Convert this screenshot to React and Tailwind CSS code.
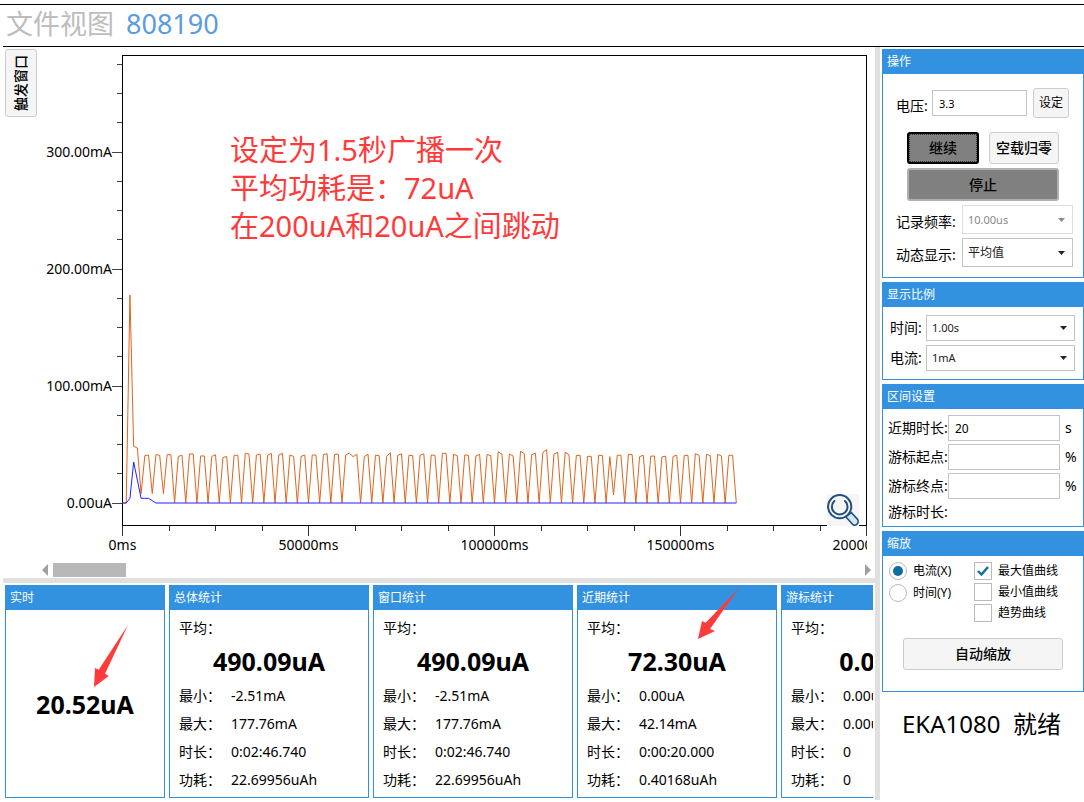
import {useState} from 'react';

const PLOT = {left: 82, top: 8, right: 826, bottom: 478, zero: 456};

const toX = (ms) => PLOT.left + 0.5 + (ms / 50000) * 186;
const toY = (mA) => PLOT.zero - mA * 1.17;

// one sample per second, mA
const MAX_CURVE = [
  0, 0, 177.8, 48.4, 47, 8, 40.4, 41, 8, 41.3, 40.8, 8, 41.3, 41.3, 0, 39.8, 40.8, 0, 41.9, 41.9,
  0, 40.2, 40.2, 0, 39.8, 41.3, 0, 38.8, 39.8, 0, 40.8, 40.8, 0, 42.4, 41.9, 0, 41, 41.9, 0, 40.8,
  42.4, 0, 41, 42.4, 0, 41, 39.8, 0, 39.8, 41, 0, 41, 41, 0, 41.2, 42.2, 0, 41.6, 41.8, 0,
  41, 42.7, 39.6, 41.6, 0, 39.6, 41.6, 0, 40.8, 40.4, 0, 39.8, 43, 0, 40.8, 42, 0, 40.8, 40.5, 0,
  40.8, 42, 0, 41, 40.8, 0, 42.5, 42.4, 0, 41.6, 40.4, 0, 41, 40.8, 0, 40.2, 41.6, 0, 41.4, 40.5,
  0, 43.8, 41.9, 0, 41.9, 40.2, 0, 44.2, 42.2, 0, 41.3, 42.5, 0, 43.3, 45.6, 0, 41.9, 43.3, 0, 43.3,
  41.3, 0, 40.5, 40.8, 0, 39.9, 39.9, 0, 40.8, 40.6, 0, 39.6, 7, 40.8, 40.8, 0, 41.6, 41.3, 0, 39.6,
  40.8, 0, 40, 40.2, 0, 39.4, 40, 0, 39.8, 40.8, 0, 40.5, 40.8, 0, 42.2, 40.8, 0, 41.6, 40.5, 0,
  41.6, 40.2, 0, 40.8, 40.8, 0,
];
const AVG_CURVE = [0, 0, 4, 35, 19.5, 4, 4, 4, 2, 0];

const linePath = (samples) => samples.map((v, i) => `${i ? 'L' : 'M'}${toX(i * 1000)} ${toY(v)}`).join('');

const X_TICKS = Array.from({length: 17}, (_, i) => i * 12500);
const Y_TICKS = Array.from({length: 16}, (_, i) => i * 25);

const STATS = [
  {title: '总体统计', avg: '490.09uA', min: '-2.51mA', max: '177.76mA', time: '0:02:46.740', used: '22.69956uAh'},
  {title: '窗口统计', avg: '490.09uA', min: '-2.51mA', max: '177.76mA', time: '0:02:46.740', used: '22.69956uAh'},
  {
    title: '近期统计',
    avg: '72.30uA',
    min: '0.00uA',
    max: '42.14mA',
    time: '0:00:20.000',
    used: '0.40168uAh',
    marked: true,
  },
  {title: '游标统计', avg: '0.00uA', min: '0.00uA', max: '0.00uA', time: '0', used: '0'},
];

function App() {
  return (
    <div className="w-full bg-white pt-1 font-['Noto_Sans','Noto_Sans_CJK_SC',sans-serif] text-sm leading-5 text-black">
      <header className="flex h-[42px] items-center gap-3 border-t border-black px-1.5 pb-[3px] text-[27px] leading-9">
        <h1 className="text-[#bdbdbd]">文件视图</h1>
        <span className="text-[#5b9be0]">808190</span>
      </header>
      <div className="ml-[3px] flex border-t border-black">
        <main className="min-w-0 flex-1">
          <ChartArea />
          <div className="h-[5px] bg-[#e0e0e0]" />
          <div className="mr-0.5 flex gap-1 overflow-hidden pt-0.5 pb-0.5 pl-0.5">
            <Panel
              title="实时"
              className="relative flex w-40 shrink-0 flex-col"
            >
              <p className="flex flex-1 items-center justify-center text-[25px] leading-8 font-bold">20.52uA</p>
              <RedArrow className="absolute top-[39px] left-[88px] h-[62px] w-[34px]" />
            </Panel>
            {STATS.map((s) => (
              <StatPanel
                key={s.title}
                {...s}
              />
            ))}
          </div>
        </main>
        <div className="w-[5px] shrink-0 bg-[#e0e0e0]" />
        <Sidebar />
      </div>
    </div>
  );
}

const Panel = ({title, className = '', children}) => {
  return (
    <section className={`border border-[#3392df] ${className}`}>
      <h2 className="h-6 bg-[#3392df] px-1 text-xs leading-6 text-white">{title}</h2>
      {children}
    </section>
  );
};

const ChartArea = () => {
  return (
    <>
      <div className="relative flex items-start gap-[3px] pl-0.5">
        <button className="mt-0.5 flex h-[68px] w-8 shrink-0 items-center justify-center rounded-[3px] border border-[#ccc] bg-[#f5f5f5] font-medium">
          <span className="rotate-180 [text-orientation:sideways] [writing-mode:vertical-rl]">触发窗口</span>
        </button>
        <div className="relative min-w-0 flex-1">
          <Chart />
          <div className="absolute top-[84px] left-[190px] text-[29px] leading-[38px] whitespace-nowrap text-[#ff3a3a]">
            <p>设定为1.5秒广播一次</p>
            <p>平均功耗是：72uA</p>
            <p>在200uA和20uA之间跳动</p>
          </div>
          <button
            aria-label="放大"
            className="absolute right-4 bottom-9 size-8 bg-[#f5f5f5]"
          >
            <Magnifier />
          </button>
        </div>
      </div>
      <div className="flex h-4 items-center pr-1 pl-[39px]">
        <svg
          viewBox="0 0 6 12"
          className="h-3 w-1.5 fill-[#a0a0a0]"
        >
          <path d="M6 0V12L0 6Z" />
        </svg>
        <div className="flex flex-1 px-[5px]">
          <div className="h-3.5 w-[73px] bg-[#b8b8b8]" />
        </div>
        <svg
          viewBox="0 0 6 12"
          className="h-3 w-1.5 fill-[#a0a0a0]"
        >
          <path d="M0 0V12L6 6Z" />
        </svg>
      </div>
    </>
  );
};

const Chart = () => {
  return (
    <svg
      viewBox="0 0 835 515"
      className="block w-full text-sm"
    >
      <defs>
        <clipPath id="axis-clip">
          <rect
            width={PLOT.right + 1}
            height="515"
          />
        </clipPath>
      </defs>
      <rect
        x={PLOT.left + 0.5}
        y={PLOT.top + 0.5}
        width={PLOT.right - PLOT.left}
        height={PLOT.bottom - PLOT.top}
        fill="none"
        stroke="#000"
      />
      {Y_TICKS.map((v) => (
        <g key={v}>
          <path
            d={`M${v % 100 ? 77 : 72} ${Math.floor(toY(v)) + 0.5}H${PLOT.left}`}
            stroke="#444"
          />
          {v % 100 === 0 && (
            <text
              x="72"
              y={Math.round(toY(v)) + 5}
              textAnchor="end"
            >
              {v ? `${v}.00mA` : '0.00uA'}
            </text>
          )}
        </g>
      ))}
      <g clipPath="url(#axis-clip)">
        {X_TICKS.map((ms) => (
          <g key={ms}>
            <path
              d={`M${Math.floor(toX(ms)) + 0.5} ${PLOT.bottom + 1}v${ms % 50000 ? 5 : 10}`}
              stroke="#333"
            />
            {ms % 50000 === 0 && (
              <text
                x={toX(ms)}
                y="503"
                textAnchor="middle"
              >
                {`${ms}ms`}
              </text>
            )}
          </g>
        ))}
      </g>
      <path
        d={linePath(MAX_CURVE)}
        fill="none"
        stroke="#e0651c"
        strokeLinejoin="bevel"
      />
      <path
        d={`${linePath(AVG_CURVE)}H${toX(165000)}`}
        fill="none"
        stroke="#2020ff"
      />
    </svg>
  );
};

const Magnifier = () => {
  return (
    <svg
      viewBox="0 0 32 32"
      className="size-8"
      fill="none"
      stroke="#264f7e"
      strokeWidth="2"
      strokeLinecap="round"
    >
      <path
        d="M18.7 22.7L24.5 18.7L30.6 25.4C32.4 28.6 29.2 32.4 26 30.8Z"
        fill="#cfe8fb"
        strokeWidth="1.6"
        strokeLinejoin="round"
      />
      <circle
        cx="12.7"
        cy="12.7"
        r="11.6"
        fill="#f5f5f5"
      />
      <path d="M7.4 7A7.8 7.8 0 1 0 18 7" />
    </svg>
  );
};

const RedArrow = ({className}) => {
  return (
    <svg
      viewBox="0 0 34 62"
      className={className}
    >
      <path
        d="M0 62L1 43L4.7 44.7L34 0L11 48.7L14.7 51Z"
        fill="#ff3a3a"
      />
    </svg>
  );
};

const StatPanel = ({title, avg, min, max, time, used, marked}) => {
  const rows = [
    ['最小：', min],
    ['最大：', max],
    ['时长：', time],
    ['功耗：', used],
  ];

  return (
    <Panel
      title={title}
      className="relative w-[200px] shrink-0"
    >
      <div className="px-[9px] pt-2 pb-[3px]">
        <p>平均：</p>
        <p className="mt-[7px] mb-[5px] text-center text-[25px] leading-8 font-bold">{avg}</p>
        <dl>
          {rows.map(([label, value]) => (
            <div
              key={label}
              className="flex leading-7"
            >
              <dt className="w-[52px]">{label}</dt>
              <dd>{value}</dd>
            </div>
          ))}
        </dl>
      </div>
      {marked && (
        <svg
          viewBox="0 0 41 51"
          className="absolute top-0.5 left-[120px] h-[51px] w-[41px]"
        >
          <path
            d="M0 51L4 33L7.7 34.7L41 0L12 41L17 43Z"
            fill="#ff3a3a"
          />
        </svg>
      )}
    </Panel>
  );
};

const Select = ({id, options, disabled, className = ''}) => {
  return (
    <div className={`relative ${disabled ? 'text-[#888]' : 'text-[#222]'} ${className}`}>
      <select
        id={id}
        disabled={disabled}
        className={`size-full appearance-none border bg-white px-[5px] ${disabled ? 'border-[#ddd]' : 'border-[#c4c4c4]'}`}
      >
        {options.map((o) => (
          <option key={o}>{o}</option>
        ))}
      </select>
      <svg
        viewBox="0 0 7 4"
        className="pointer-events-none absolute top-1/2 right-2 -mt-0.5 h-1 w-[7px] fill-current"
      >
        <path d="M0 0H7L3.5 4Z" />
      </svg>
    </div>
  );
};

const Sidebar = () => {
  return (
    <aside className="flex w-[204px] shrink-0 flex-col gap-1 pt-0.5 pl-0.5">
      <Panel title="操作">
        <div className="flex items-center px-[13px] pt-[14px]">
          <label
            htmlFor="voltage"
            className="w-9 pt-1.5"
          >
            电压:
          </label>
          <input
            id="voltage"
            defaultValue="3.3"
            className="h-[26px] w-[95px] border border-[#c4c4c4] px-1.5 text-[11px]"
          />
          <button className="ml-1.5 h-[30px] w-9 rounded-[3px] border border-[#ccc] bg-[#f5f5f5] text-xs">设定</button>
        </div>
        <div className="grid grid-cols-[72px_70px] gap-x-2.5 gap-y-1 px-6 pt-[14px] font-medium">
          <button className="h-8 rounded-[3px] border-2 border-black bg-[#808080] outline-1 -outline-offset-3 outline-[#333] outline-dotted">
            继续
          </button>
          <button className="h-8 rounded-[3px] border border-[#ccc] bg-[#f5f5f5] whitespace-nowrap">空载归零</button>
          <button className="col-span-2 h-[33px] rounded-[3px] border-2 border-[#b0b0b0] bg-[#808080]">停止</button>
        </div>
        <div className="grid grid-cols-[66px_111px] items-center gap-y-1 px-[13px] pt-1 pb-2.5">
          <label
            htmlFor="rate"
            className="pt-1"
          >
            记录频率:
          </label>
          <Select
            id="rate"
            options={['10.00us']}
            disabled
            className="h-[29px] text-[11px]"
          />
          <label
            htmlFor="live"
            className="pt-1"
          >
            动态显示:
          </label>
          <Select
            id="live"
            options={['平均值']}
            className="h-[29px] text-xs"
          />
        </div>
      </Panel>

      <Panel title="显示比例">
        <div className="grid grid-cols-[36px_149px] items-center gap-y-1 px-[7px] py-2">
          <label htmlFor="scale-time">时间:</label>
          <Select
            id="scale-time"
            options={['1.00s']}
            className="h-[26px] text-[11px]"
          />
          <label htmlFor="scale-current">电流:</label>
          <Select
            id="scale-current"
            options={['1mA']}
            className="h-[26px] text-[11px]"
          />
        </div>
      </Panel>

      <Panel title="区间设置">
        <div className="grid grid-cols-[60px_112px_auto] items-center gap-y-[3px] px-[5px] pt-1.5 pb-1">
          <RangeField
            id="recent"
            label="近期时长:"
            value="20"
            unit="s"
          />
          <RangeField
            id="cursor-start"
            label="游标起点:"
            value=""
            unit="%"
          />
          <RangeField
            id="cursor-end"
            label="游标终点:"
            value=""
            unit="%"
          />
          <span>游标时长:</span>
        </div>
      </Panel>

      <ZoomPanel />

      <p className="pt-3 pl-5 text-2xl leading-8 whitespace-pre">EKA1080  就绪</p>
    </aside>
  );
};

const RangeField = ({id, label, value, unit}) => {
  return (
    <>
      <label
        htmlFor={id}
        className="whitespace-nowrap"
      >
        {label}
      </label>
      <input
        id={id}
        defaultValue={value}
        className="h-[26px] w-full border border-[#c4c4c4] px-1.5 text-xs"
      />
      <span className="pl-[5px]">{unit}</span>
    </>
  );
};

const ZoomPanel = () => {
  const [axis, setAxis] = useState('x');

  return (
    <Panel title="缩放">
      <div className="flex gap-[22px] px-1.5 pt-1.5 text-xs">
        <div className="flex w-[63px] flex-col gap-1">
          <Radio
            label="电流(X)"
            checked={axis === 'x'}
            onChange={() => setAxis('x')}
          />
          <Radio
            label="时间(Y)"
            checked={axis === 'y'}
            onChange={() => setAxis('y')}
          />
        </div>
        <div className="flex flex-col gap-[3px]">
          <Check
            label="最大值曲线"
            checked
          />
          <Check label="最小值曲线" />
          <Check label="趋势曲线" />
        </div>
      </div>
      <div className="px-5 pt-4 pb-[21px]">
        <button className="h-8 w-full rounded-[3px] border border-[#ccc] bg-[#f5f5f5] font-medium">自动缩放</button>
      </div>
    </Panel>
  );
};

const Radio = ({label, checked, onChange}) => {
  return (
    <label className="flex h-[18px] items-center gap-1.5 whitespace-nowrap">
      <input
        type="radio"
        name="axis"
        checked={checked}
        onChange={onChange}
        className="size-[18px] shrink-0 appearance-none rounded-full border border-[#bbb] bg-clip-content p-[3px] checked:bg-[#0e6e9e]"
      />
      {label}
    </label>
  );
};

const Check = ({label, checked = false}) => {
  return (
    <label className="relative flex h-[18px] items-center gap-1.5 whitespace-nowrap">
      <input
        type="checkbox"
        defaultChecked={checked}
        className="peer size-[18px] shrink-0 appearance-none border border-[#bbb]"
      />
      <svg
        viewBox="0 0 18 18"
        className="pointer-events-none absolute top-0 left-0 hidden size-[18px] peer-checked:block"
        fill="none"
        stroke="#0e6e9e"
        strokeWidth="2.4"
      >
        <path d="M4 9L7.5 12.5L14 5" />
      </svg>
      {label}
    </label>
  );
};

export default App;
